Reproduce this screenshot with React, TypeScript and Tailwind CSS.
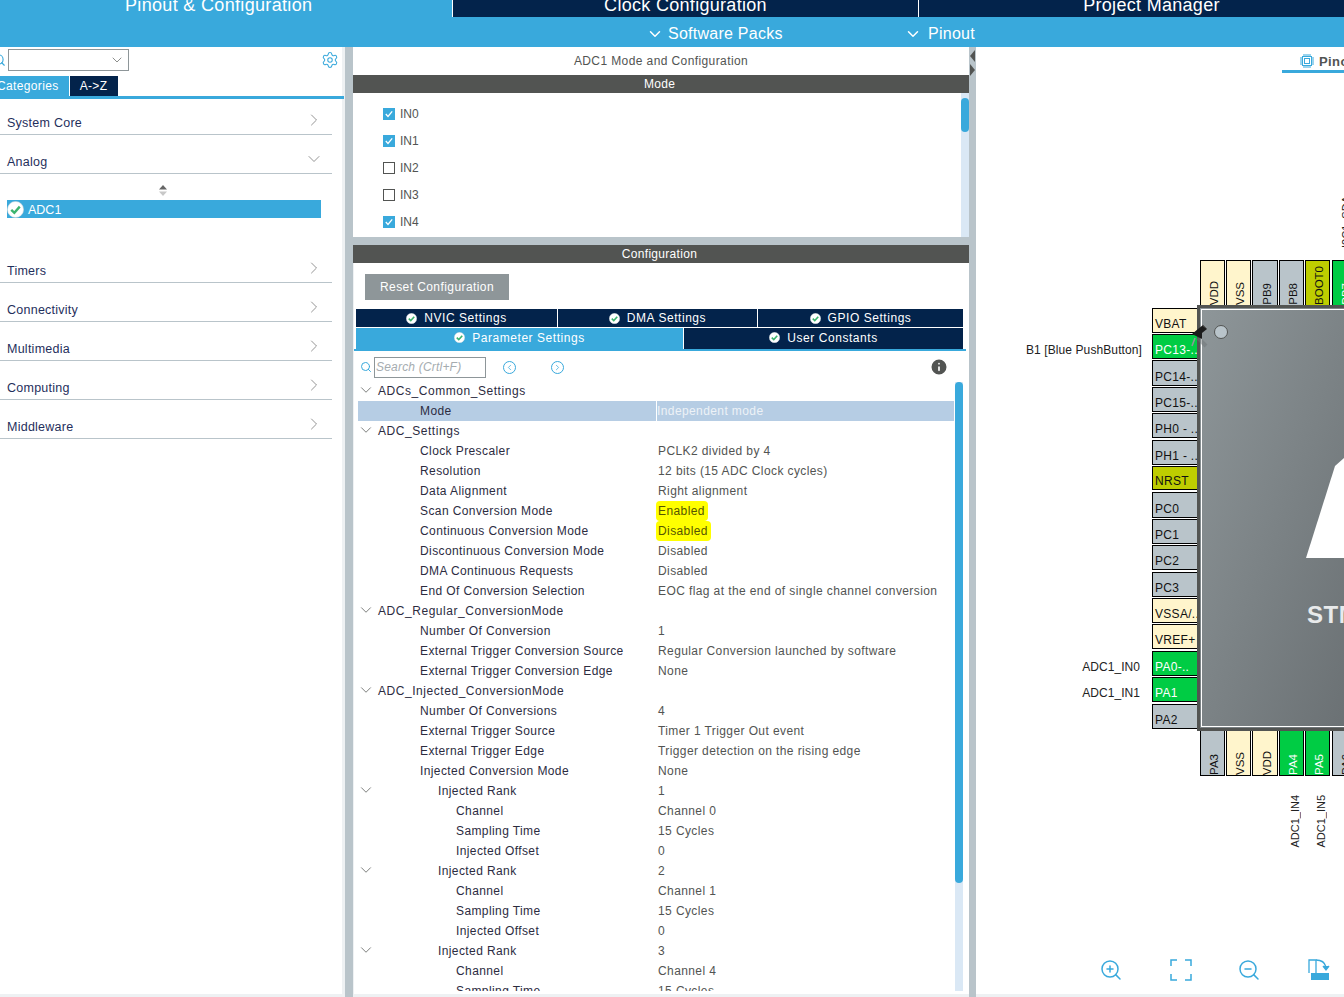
import React from "react";
import { ChevronDown, ChevronRight, Settings, Search, ZoomIn, ZoomOut, ChevronLeft, Info } from "lucide-react";

const font = "font-['Liberation_Sans',Arial,sans-serif]";

type TreeRow = { label: string; value?: string; level: number; open?: boolean; selected?: boolean; mark?: boolean };

const treeRows: TreeRow[] = [
  { label: "ADCs_Common_Settings", level: 0, open: true },
  { label: "Mode", value: "Independent mode", level: 1, selected: true },
  { label: "ADC_Settings", level: 0, open: true },
  { label: "Clock Prescaler", value: "PCLK2 divided by 4", level: 1 },
  { label: "Resolution", value: "12 bits (15 ADC Clock cycles)", level: 1 },
  { label: "Data Alignment", value: "Right alignment", level: 1 },
  { label: "Scan Conversion Mode", value: "Enabled", level: 1, mark: true },
  { label: "Continuous Conversion Mode", value: "Disabled", level: 1, mark: true },
  { label: "Discontinuous Conversion Mode", value: "Disabled", level: 1 },
  { label: "DMA Continuous Requests", value: "Disabled", level: 1 },
  { label: "End Of Conversion Selection", value: "EOC flag at the end of single channel conversion", level: 1 },
  { label: "ADC_Regular_ConversionMode", level: 0, open: true },
  { label: "Number Of Conversion", value: "1", level: 1 },
  { label: "External Trigger Conversion Source", value: "Regular Conversion launched by software", level: 1 },
  { label: "External Trigger Conversion Edge", value: "None", level: 1 },
  { label: "ADC_Injected_ConversionMode", level: 0, open: true },
  { label: "Number Of Conversions", value: "4", level: 1 },
  { label: "External Trigger Source", value: "Timer 1 Trigger Out event", level: 1 },
  { label: "External Trigger Edge", value: "Trigger detection on the rising edge", level: 1 },
  { label: "Injected Conversion Mode", value: "None", level: 1 },
  { label: "Injected Rank", value: "1", level: 2, open: true },
  { label: "Channel", value: "Channel 0", level: 3 },
  { label: "Sampling Time", value: "15 Cycles", level: 3 },
  { label: "Injected Offset", value: "0", level: 3 },
  { label: "Injected Rank", value: "2", level: 2, open: true },
  { label: "Channel", value: "Channel 1", level: 3 },
  { label: "Sampling Time", value: "15 Cycles", level: 3 },
  { label: "Injected Offset", value: "0", level: 3 },
  { label: "Injected Rank", value: "3", level: 2, open: true },
  { label: "Channel", value: "Channel 4", level: 3 },
  { label: "Sampling Time", value: "15 Cycles", level: 3 },
];

const leftPins = [
  { name: "VBAT", top: 308, h: 25, kind: "power" },
  { name: "PC13-..", top: 334, h: 25, kind: "on" },
  { name: "PC14-..", top: 360, h: 26, kind: "off" },
  { name: "PC15-..", top: 387, h: 25, kind: "off" },
  { name: "PH0 - ..", top: 413, h: 25, kind: "off" },
  { name: "PH1 - ..", top: 440, h: 25, kind: "off" },
  { name: "NRST", top: 466, h: 24, kind: "reset" },
  { name: "PC0", top: 492, h: 26, kind: "off" },
  { name: "PC1", top: 519, h: 25, kind: "off" },
  { name: "PC2", top: 545, h: 25, kind: "off" },
  { name: "PC3", top: 572, h: 25, kind: "off" },
  { name: "VSSA/..", top: 598, h: 25, kind: "power" },
  { name: "VREF+", top: 624, h: 25, kind: "power" },
  { name: "PA0-..", top: 651, h: 25, kind: "on" },
  { name: "PA1", top: 677, h: 25, kind: "on" },
  { name: "PA2", top: 704, h: 25, kind: "off" },
];

const topPins = [
  { name: "VDD", left: 1200, w: 25, kind: "power" },
  { name: "VSS", left: 1226, w: 25, kind: "power" },
  { name: "PB9", left: 1252, w: 26, kind: "off" },
  { name: "PB8", left: 1279, w: 25, kind: "off" },
  { name: "BOOT0", left: 1305, w: 25, kind: "reset" },
  { name: "PB7", left: 1332, w: 25, kind: "on" },
];

const bottomPins = [
  { name: "PA3", left: 1200, w: 25, kind: "off" },
  { name: "VSS", left: 1226, w: 25, kind: "power" },
  { name: "VDD", left: 1252, w: 26, kind: "power" },
  { name: "PA4", left: 1279, w: 25, kind: "on" },
  { name: "PA5", left: 1305, w: 25, kind: "on" },
  { name: "PA6", left: 1332, w: 25, kind: "off" },
];

const pinColor = (kind: string) => {
  if (kind === "power") return "bg-[#FFF5CC] text-[#111111]";
  if (kind === "on") return "bg-[#00CC44] text-white";
  if (kind === "reset") return "bg-[#BECD00] text-[#111111]";
  return "bg-[#B9C4CA] text-[#111111]";
};

const CheckDot = ({ size = 12 }: { size?: number }) => (
  <svg width={size} height={size} viewBox="0 0 12 12" className="shrink-0">
    <circle cx="6" cy="6" r="5.7" fill="#ffffff" stroke="#c8d4d8" strokeWidth="0.4" />
    <path d="M3 6.2 L5.2 8.3 L9 4" fill="none" stroke="#3CB46E" strokeWidth="1.7" />
  </svg>
);

const CategoryRow = ({ label, open, first }: { label: string; open?: boolean; first?: boolean }) => (
  <div className={`flex items-end justify-between border-b border-[#B9C4CA] w-[332px] pl-[7px] pr-[13px] pb-[1px] text-[12.5px] tracking-[0.25px] text-[#1f2f5c] ${first ? "h-[36px]" : "h-[39px]"}`}>
    <span>{label}</span>
    {open ? (
      <ChevronDown size={20} strokeWidth={1} className="text-[#808080] mb-[3px] -mr-[5px]" />
    ) : (
      <ChevronRight size={20} strokeWidth={1} className="text-[#808080] mb-[3px] -mr-[5px]" />
    )}
  </div>
);

const ModeCheck = ({ label, checked }: { label: string; checked?: boolean }) => (
  <div className="flex items-center h-[27px] gap-[5px] text-[12px] text-[#525452]">
    {checked ? (
      <span className="w-[12px] h-[12px] bg-[#39A9DC] flex items-center justify-center">
        <svg width="10" height="10" viewBox="0 0 10 10">
          <path d="M1.8 5 L4 7.5 L8.2 2.4" fill="none" stroke="#ffffff" strokeWidth="1.3" />
        </svg>
      </span>
    ) : (
      <span className="w-[12px] h-[12px] border border-[#525452] bg-white" />
    )}
    <span>{label}</span>
  </div>
);

const SubTab = ({ label, className }: { label: string; className: string }) => (
  <div className={`flex items-center justify-center gap-[7px] text-[12px] tracking-[0.55px] text-white ${className}`}>
    <CheckDot size={11} />
    <span>{label}</span>
  </div>
);

const TreeLine = ({ row }: { row: TreeRow }) => {
  const indent = row.level === 0 ? "pl-[20px] tracking-[0.55px]" : row.level === 1 ? "pl-[62px]" : row.level === 2 ? "pl-[80px]" : "pl-[98px]";
  return (
    <div className={`flex h-[20px] items-center text-[12px] tracking-[0.4px] relative ${row.selected ? "bg-[#B6CDE4]" : ""}`}>
      {row.open && <ChevronDown size={18} strokeWidth={1} className="absolute left-[-1.5px] top-[0px] text-[#525452]" />}
      <div className={`w-[298px] shrink-0 text-[#2c2c3f] whitespace-nowrap ${indent} ${row.level === 0 ? "w-[400px]" : ""}`}>{row.label}</div>
      {row.value && (
        <div className={`h-full flex items-center whitespace-nowrap ${row.selected ? "border-l border-white text-[#EDF2F7]" : "pl-[2px] text-[#525452]"}`}>
          {row.mark ? <span className="bg-[#FFFF00] -ml-[2px] pl-[2px] pr-[3px] py-[1px] rounded-sm text-[#555500]">{row.value}</span> : row.value}
        </div>
      )}
    </div>
  );
};

const PinLabel = ({ name }: { name: string }) => (
  <span className="whitespace-nowrap [writing-mode:vertical-rl] rotate-180 text-[11.5px] leading-none pb-[1px] ml-[5px]">{name}</span>
);

export default function App() {
  return (
    <div className={`w-[1344px] h-[997px] overflow-hidden bg-white relative ${font}`}>
      {/* top tabs */}
      <div className="h-[47px] bg-[#39A9DC] text-white">
        <div className="flex h-[17px] overflow-hidden">
          <div className="w-[452px] shrink-0 pl-[125px] text-[18px] tracking-[0.33px] leading-[10px]">Pinout &amp; Configuration</div>
          <div className="w-[466px] shrink-0 bg-[#03234B] border-l border-white text-center text-[18px] tracking-[0.3px] leading-[10px]">Clock Configuration</div>
          <div className="w-[466px] shrink-0 bg-[#03234B] border-l border-white text-center text-[18px] tracking-[0.3px] leading-[10px]">Project Manager</div>
        </div>
        <div className="flex h-[30px] items-center pt-[3px] text-[16px] tracking-[0.25px] pl-[646px]">
          <ChevronDown size={18} strokeWidth={2} />
          <span className="ml-[4px] w-[238px]">Software Packs</span>
          <ChevronDown size={18} strokeWidth={2} className="ml-[-2px]" />
          <span className="ml-[6px]">Pinout</span>
        </div>
      </div>

      <div className="flex h-[950px]">
        {/* left categories */}
        <div className="w-[345px] shrink-0 bg-white border-b-[3px] border-[#EEF1F3] relative">
          <div className="absolute right-0 top-0 bottom-0 w-[3px] bg-[#EEF1F3]" />
          <div className="flex items-center h-[29px] relative">
            <Search size={14} className="text-[#39A9DC] absolute left-[-8px] top-[6px]" strokeWidth={2} />
            <div className="ml-[8px] w-[121px] h-[22px] mt-[-3px] border border-[#8e9699] flex items-center justify-end pr-[3px]">
              <ChevronDown size={16} strokeWidth={1} className="text-[#525452]" />
            </div>
            <Settings size={18} strokeWidth={1.4} className="text-[#39A9DC] absolute left-[321px] top-[4px]" />
          </div>
          <div className="flex h-[20px] text-[12px] tracking-[0.35px] text-white">
            <div className="w-[69px] bg-[#39A9DC] overflow-hidden whitespace-nowrap -indent-[3px] leading-[20px]">Categories</div>
            <div className="w-[48px] ml-[1px] bg-[#03234B] text-center leading-[20px] pr-[1px]">A-&gt;Z</div>
          </div>
          <div className="h-[3px] w-[344px] bg-[#39A9DC] relative" />
          <CategoryRow label="System Core" first />
          <CategoryRow label="Analog" open />
          <div className="h-[70px] relative">
            <svg width="10" height="12" viewBox="0 0 10 12" className="absolute left-[158px] top-[11px]">
              <path d="M5 0 L9 4.5 L1 4.5 Z" fill="#666666" />
              <path d="M5 11 L9 6.5 L1 6.5 Z" fill="#c8c8c8" />
            </svg>
            <div className="absolute left-[7px] top-[26px] w-[314px] h-[18px] bg-[#39A9DC] flex items-center text-[12.5px] text-white">
              <CheckDot size={17} />
              <span className="ml-[4px] mt-[2px]">ADC1</span>
            </div>
          </div>
          {["Timers", "Connectivity", "Multimedia", "Computing", "Middleware"].map((c) => (
            <CategoryRow key={c} label={c} />
          ))}
        </div>

        <div className="w-[8px] shrink-0 bg-[#B9C4CA]" />

        {/* middle */}
        <div className="w-[616px] shrink-0 flex flex-col bg-[#B9C4CA]">
          <div className="h-[28px] bg-white text-center leading-[28px] text-[12px] tracking-[0.4px] text-[#525452]">ADC1 Mode and Configuration</div>
          <div className="h-[18px] bg-[#525452] text-white text-center text-[12px] tracking-[0.3px] pr-[3px] leading-[19px]">Mode</div>
          <div className="h-[144px] bg-white relative overflow-hidden pl-[30px] pt-[7px]">
            <ModeCheck label="IN0" checked />
            <ModeCheck label="IN1" checked />
            <ModeCheck label="IN2" />
            <ModeCheck label="IN3" />
            <ModeCheck label="IN4" checked />
            <div className="absolute right-0 top-0 bottom-0 w-[8px] bg-[#DAE8F5] pt-[5px]">
              <div className="h-[34px] bg-[#39A9DC] rounded-[4px]" />
            </div>
          </div>
          <div className="h-[8px]" />
          <div className="h-[18px] bg-[#525452] text-white text-center text-[12px] tracking-[0.3px] pr-[3px] leading-[19px]">Configuration</div>
          <div className="h-[734px] bg-white border-l border-[#EEF1F3] flex flex-col overflow-hidden">
            <div className="ml-[11px] mt-[11px] w-[144px] h-[26px] bg-[#8E9699] text-white text-[12px] tracking-[0.42px] flex items-center justify-center">Reset Configuration</div>
            <div className="ml-[2px] mt-[9px] w-[607px] flex h-[18px] gap-[1px]">
              <SubTab label="NVIC Settings" className="w-[201px] bg-[#03234B]" />
              <SubTab label="DMA Settings" className="w-[199px] bg-[#03234B]" />
              <SubTab label="GPIO Settings" className="flex-1 bg-[#03234B]" />
            </div>
            <div className="ml-[2px] mt-[1px] w-[607px] flex h-[21px] gap-[1px]">
              <SubTab label="Parameter Settings" className="w-[327px] bg-[#39A9DC] pb-[2px]" />
              <SubTab label="User Constants" className="flex-1 bg-[#03234B] pb-[2px]" />
            </div>
            <div className="w-[612px] h-[2px] bg-[#39A9DC]" />
            <div className="flex items-center h-[30px] relative">
              <Search size={12} strokeWidth={2} className="text-[#39A9DC] absolute left-[6px] top-[10px]" />
              <div className="ml-[20px] w-[112px] h-[21px] border border-[#8e9699] text-[12px] italic tracking-[0.2px] text-[#A5ACB0] pl-[1px] leading-[19px] mt-[3px]">Search (Crtl+F)</div>
              <span className="absolute left-[149px] top-[10px] w-[13px] h-[13px] rounded-full border border-[#39A9DC] flex items-center justify-center">
                <ChevronLeft size={9} strokeWidth={2} className="text-[#39A9DC]" />
              </span>
              <span className="absolute left-[197px] top-[10px] w-[13px] h-[13px] rounded-full border border-[#39A9DC] flex items-center justify-center">
                <ChevronRight size={9} strokeWidth={2} className="text-[#39A9DC]" />
              </span>
              <Info size={20} fill="#525452" stroke="#ffffff" strokeWidth={2} className="absolute left-[575px] top-[6px]" />
            </div>
            <div className="flex h-[610px] pl-[4px]">
              <div className="w-[596px] overflow-hidden">
                {treeRows.map((row, i) => (
                  <TreeLine key={i} row={row} />
                ))}
              </div>
              <div className="w-[8px] ml-[1px] bg-[#DAE8F5] mt-[1px] h-[609px]">
                <div className="h-[501px] bg-[#39A9DC] rounded-[4px]" />
              </div>
            </div>
            <div className="h-[3px] shrink-0" />
            <div className="flex-1 bg-[#EEF1F3]" />
          </div>
        </div>

        <div className="w-[7px] shrink-0 bg-[#B9C4CA] relative">
          <svg width="7" height="30" viewBox="0 0 7 30" className="absolute top-[3px] left-0">
            <path d="M6 0 L1 6 L6 12 Z" fill="#525452" />
            <path d="M1 14 L6 20 L1 26 Z" fill="#525452" />
          </svg>
        </div>
        <div className="flex-1 bg-white border-b-[3px] border-[#EEF1F3]" />
      </div>

      {/* pinout view tab */}
      <div className="absolute left-[1282px] top-[47px] w-[62px] h-[26px] overflow-hidden">
        <svg width="14" height="14" viewBox="0 0 14 14" className="absolute left-[18px] top-[7px]" fill="none" stroke="#39A9DC">
          <rect x="2.5" y="2.5" width="9" height="9" />
          <rect x="4.5" y="4.5" width="5" height="5" />
          <path d="M4 0v2M6 0v2M8 0v2M10 0v2M4 12v2M6 12v2M8 12v2M10 12v2M0 4h2M0 6h2M0 8h2M0 10h2M12 4h2M12 6h2M12 8h2M12 10h2" />
        </svg>
        <span className="absolute left-[37px] top-[5px] text-[13px] font-bold text-[#525452] whitespace-nowrap tracking-[0.4px]">Pinout view</span>
        <div className="absolute left-0 right-0 bottom-0 h-[3px] bg-[#39A9DC]" />
      </div>

      {/* chip diagram */}
      {topPins.map((p) => (
        <div key={p.name} style={{ left: p.left, width: p.w }} className={`absolute top-[260px] h-[46px] border border-black flex items-end justify-center ${pinColor(p.kind)}`}>
          <PinLabel name={p.name} />
        </div>
      ))}
      {bottomPins.map((p) => (
        <div key={p.name} style={{ left: p.left, width: p.w }} className={`absolute top-[730px] h-[46px] border border-black flex items-end justify-center ${pinColor(p.kind)}`}>
          <PinLabel name={p.name} />
        </div>
      ))}
      {leftPins.map((p) => (
        <div key={p.name} style={{ top: p.top, height: p.h }} className={`absolute left-[1152px] w-[46px] border border-black flex items-end pl-[2px] pb-[1px] text-[12px] tracking-[0.3px] overflow-hidden whitespace-nowrap ${pinColor(p.kind)}`}>
          <span className="-mb-[2px]">{p.name}</span>
        </div>
      ))}
      <div className="absolute left-[1197px] top-[305px] w-[160px] h-[426px] border-[3px] border-[#525452] bg-gradient-to-br from-[#8E9699] to-[#6A7073] overflow-hidden">
        <div className="absolute inset-[1px] border border-white border-r-0" />
        <div className="absolute left-[14px] top-[17px] w-[14px] h-[14px] rounded-full bg-[#B9C4CA] border border-[#525452]" />
        <svg width="50" height="110" viewBox="0 0 50 110" className="absolute left-[106px] top-[150px]">
          <path d="M0 100 L29 8 L38 0 L50 0 L50 100 Z" fill="#ffffff" />
        </svg>
        <span className="absolute left-[107px] top-[289px] text-[24px] tracking-[0.6px] font-bold text-[#E8EAEB] whitespace-nowrap">STM32F4</span>
      </div>
      {/* pin marker */}
      <svg width="24" height="26" viewBox="0 0 24 26" className="absolute left-[1188px] top-[322px]">
        <path d="M10 16 L18 24" stroke="#6A7073" strokeOpacity="0.45" strokeWidth="4" />
        <path d="M7 16 L4 24" stroke="#8E9699" strokeWidth="1.5" />
        <path d="M10 7 L15 3 L19 7 L14 11 L14 17 L4 12 Z" fill="#1c1c1c" />
        <path d="M14 3 L18 6" stroke="#555555" strokeWidth="1" />
      </svg>

      <div className="absolute right-[202px] top-[341px] text-[12px] tracking-[0.1px] text-[#222222] whitespace-nowrap">B1 [Blue PushButton]</div>
      <div className="absolute right-[204px] top-[658px] text-[12px] tracking-[0.05px] text-[#222222]">ADC1_IN0</div>
      <div className="absolute right-[204px] top-[684px] text-[12px] tracking-[0.05px] text-[#222222]">ADC1_IN1</div>
      <div className="absolute left-[1289px] top-[795px] text-[11px] leading-[12px] text-[#222222] [writing-mode:vertical-rl] rotate-180">ADC1_IN4</div>
      <div className="absolute left-[1315px] top-[795px] text-[11px] leading-[12px] text-[#222222] [writing-mode:vertical-rl] rotate-180">ADC1_IN5</div>
      <div className="absolute left-[1340px] top-[196px] text-[11px] leading-[12px] text-[#222222] [writing-mode:vertical-rl] rotate-180">I2C1_SDA</div>

      {/* zoom toolbar */}
      <ZoomIn size={24} strokeWidth={1.5} className="absolute left-[1099px] top-[958px] text-[#39A9DC]" />
      <svg width="22" height="22" viewBox="0 0 22 22" className="absolute left-[1170px] top-[959px]" fill="none" stroke="#39A9DC" strokeWidth="1.5">
        <path d="M1 7V1H7M15 1H21V7M21 15V21H15M7 21H1V15" />
      </svg>
      <ZoomOut size={24} strokeWidth={1.5} className="absolute left-[1237px] top-[958px] text-[#39A9DC]" />
      <svg width="22" height="22" viewBox="0 0 22 22" className="absolute left-[1308px] top-[959px]" fill="none" stroke="#39A9DC" strokeWidth="1.3">
        <path d="M1 14V1H8V14" />
        <path d="M8 1C14 1 17 4 18 8" />
        <path d="M15 7L18 11L21 7" fill="#39A9DC" />
        <rect x="3" y="14" width="18" height="7" fill="#39A9DC" stroke="none" />
      </svg>
    </div>
  );
}
